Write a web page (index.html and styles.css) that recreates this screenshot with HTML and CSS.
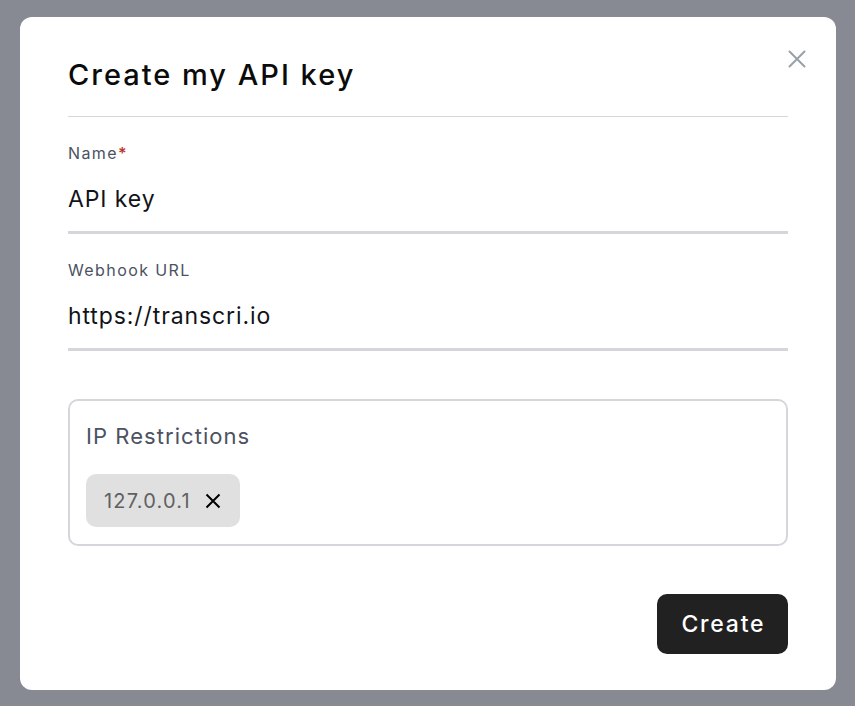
FILE: index.html
```html
<!DOCTYPE html>
<html lang="en">
<head>
<meta charset="utf-8">
<title>Create my API key</title>
<link rel="stylesheet" href="styles.css">
</head>
<body>
<div class="backdrop">
  <div class="modal">
    <button class="close" aria-label="Close">
      <svg width="18" height="18" viewBox="0 0 18 18"><path d="M1.5 1.5L16.5 16.5M16.5 1.5L1.5 16.5" stroke="currentColor" stroke-width="2" stroke-linecap="round"/></svg>
    </button>
    <div class="header">
      <h1 class="title">Create my API key</h1>
    </div>
    <div class="field">
      <label class="label">Name<span class="req">*</span></label>
      <div class="input">API key</div>
    </div>
    <div class="field">
      <label class="label">Webhook URL</label>
      <div class="input">https://transcri.io</div>
    </div>
    <div class="ipbox">
      <div class="iplabel">IP Restrictions</div>
      <div class="chips">
        <span class="chip"><span class="chiptext">127.0.0.1</span>
          <svg class="chipx" width="16" height="16" viewBox="0 0 16 16"><path d="M1.5 1.5L14.5 14.5M14.5 1.5L1.5 14.5" stroke="currentColor" stroke-width="2"/></svg>
        </span>
      </div>
    </div>
    <div class="actions">
      <button class="create">Create</button>
    </div>
  </div>
</div>
</body>
</html>
```
FILE: styles.css
```css
* { box-sizing: border-box; }
html, body { margin: 0; padding: 0; }
body {
  font-family: "Inter", "Noto Sans", sans-serif;
  background: #878a93;
  width: 855px;
  height: 706px;
  overflow: hidden;
}
.backdrop {
  padding: 17px 19px 16px 20px;
  height: 706px;
}
.modal {
  position: relative;
  background: #ffffff;
  border-radius: 12px;
  height: 673px;
  padding: 42px 48px 36px 48px;
  display: flex;
  flex-direction: column;
}
.close {
  position: absolute;
  top: 33px;
  right: 30px;
  border: 0;
  background: none;
  padding: 0;
  color: #9aa0aa;
  width: 18px;
  height: 18px;
  display: flex;
}
.header {
  border-bottom: 1px solid #d4d6db;
  padding-bottom: 25px;
}
.title {
  margin: 0;
  font-size: 29px;
  line-height: 32px;
  font-weight: 500;
  color: #0b0b0b;
  letter-spacing: 2px;
}
.field {
  margin-top: 24px;
}
.label {
  display: block;
  font-size: 16px;
  line-height: 24px;
  color: #4b5262;
  letter-spacing: 1.4px;
}
.req { color: #c0392b; font-weight: 600; }
.input {
  font-size: 23px;
  line-height: 32px;
  padding: 18px 0 16px 0;
  color: #111318;
  border-bottom: 3px solid #d4d6db;
  letter-spacing: 0.9px;
}
.ipbox {
  margin-top: 48px;
  border: 2px solid #d4d6db;
  border-radius: 10px;
  padding: 20px 16px 16px 16px;
  height: 147px;
}
.iplabel {
  font-size: 22px;
  line-height: 30px;
  color: #4b5262;
  letter-spacing: 1.05px;
}
.chips {
  margin-top: 23px;
  display: flex;
}
.chip {
  display: inline-flex;
  align-items: center;
  gap: 15px;
  background: #e0e0e0;
  border-radius: 10px;
  height: 53px;
  padding: 0 19px 0 18px;
  font-size: 20px;
  color: #616161;
}
.chiptext { letter-spacing: 1.2px; margin-right: -1.2px; }
.chipx { color: #000; }
.actions {
  margin-top: auto;
  display: flex;
  justify-content: flex-end;
}
.create {
  background: #212121;
  color: #ffffff;
  border: 0;
  border-radius: 10px;
  width: 131px;
  height: 60px;
  font-family: inherit;
  font-size: 23px;
  font-weight: 500;
  letter-spacing: 1.8px;
  padding: 0 0 0 1.8px;
}
```
